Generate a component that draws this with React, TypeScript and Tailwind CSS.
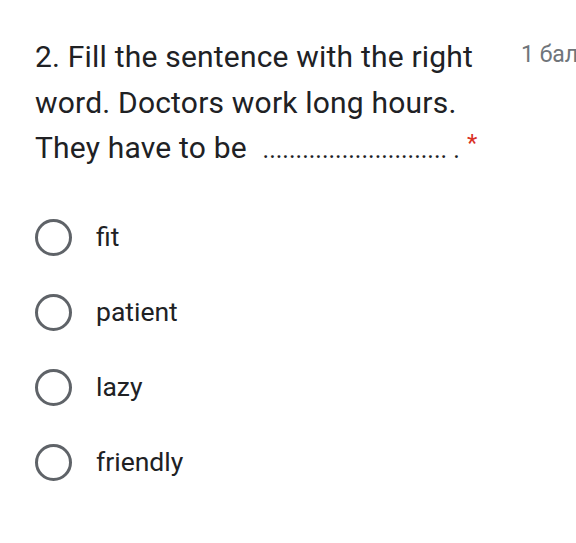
import React from "react";

const options = ["fit", "patient", "lazy", "friendly"];

export default function App() {
  return (
    <div
      className="w-[576px] h-[543px] bg-white overflow-hidden"
      style={{ fontFamily: "Roboto, 'Liberation Sans', sans-serif" }}
    >
      <div className="flex pt-[34px] pl-[35px]">
        <div className="w-[452px] shrink-0 text-[30px] leading-[45.5px] text-[#202124] tracking-[0.2px]">
          2. Fill the sentence with the right word. Doctors work long hours. They have to be{" "}
          <span className="whitespace-nowrap">
            <span className="text-[25px] tracking-normal ml-[8px]">............................</span>
            <span className="ml-[6px] text-[25px]">.</span>
            <span className="relative top-[-7px] ml-[7px] text-[24px] text-[#d93025]">*</span>
          </span>
        </div>
        <div className="ml-[34px] pt-[4px] text-[23px] text-[#70757a] whitespace-nowrap">1 бал</div>
      </div>
      <div className="mt-[26px] flex flex-col pl-[35px]">
        {options.map((o) => (
          <div key={o} className="flex items-center h-[75px]">
            <div className="w-[37px] h-[37px] rounded-full border-[3px] border-[#5f6368]" />
            <span className="ml-[24px] text-[26.5px] text-[#202124]">{o}</span>
          </div>
        ))}
      </div>
    </div>
  );
}
